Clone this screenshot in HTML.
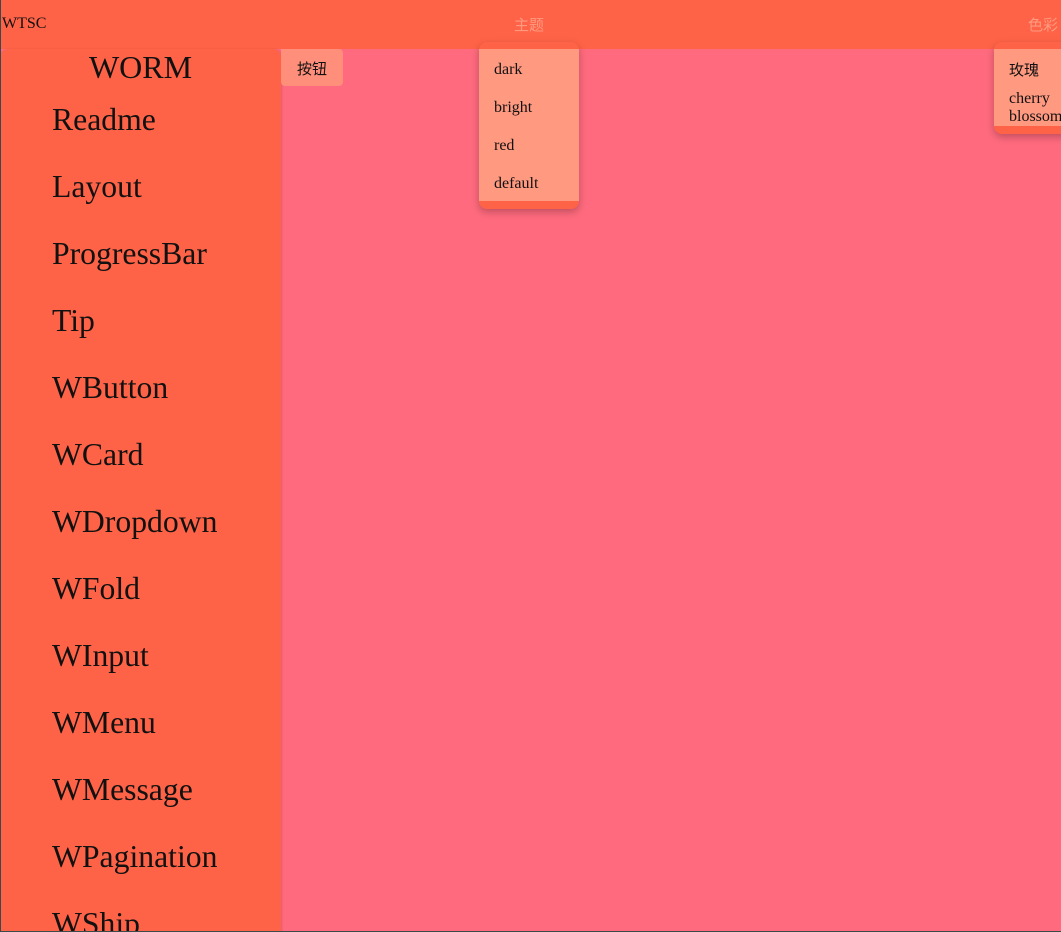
<!DOCTYPE html>
<html><head><meta charset="utf-8"><style>
*{margin:0;padding:0;box-sizing:border-box}
html,body{width:1061px;height:932px;overflow:hidden}
body{background:#ff6a7e;font-family:"Liberation Serif","Noto Serif CJK SC",serif;position:relative}
.bl{position:absolute;left:0;top:0;width:1px;height:932px;background:#3a4a4a;z-index:5}
.bb{position:absolute;left:0;top:931px;width:1061px;height:1px;background:#3a4a4a;z-index:5}
.hdr{position:absolute;left:0;top:0;width:1061px;height:49px;background:#ff6347}
.wtsc{position:absolute;left:2px;top:15px;font-size:16px;color:#111}
.t1{position:absolute;left:514px;top:14px;font-size:15px;color:#ff9a80;font-family:"Liberation Sans","Noto Sans CJK SC",sans-serif}
.t2{position:absolute;left:1028px;top:14px;font-size:15px;color:#ff9a80;font-family:"Liberation Sans","Noto Sans CJK SC",sans-serif}
.side{position:absolute;left:0;top:49px;width:281px;height:890px;background:#ff6347;border-radius:8px 8px 0 0;box-shadow:1px 0 2px rgba(0,0,0,.12)}
.worm{position:absolute;left:0;width:281px;top:47px;text-align:center;font-size:32px;line-height:40px;color:#111}
.items{position:absolute;left:52px;top:86px;font-size:31.7px;line-height:67px;color:#111}
.btn{position:absolute;left:281px;top:49px;width:62px;height:37px;background:#ff8e7a;border-radius:0 4px 4px 4px;font-size:15px;line-height:41px;text-align:center;font-family:"Liberation Sans","Noto Sans CJK SC",sans-serif;color:#111}
.dd{position:absolute;background:#ff6347;border-radius:8px;box-shadow:0 3px 8px rgba(0,0,0,.25);padding:7px 0 8px}
.dd .in{background:#ff9980}
.d1{left:479px;top:42px;width:100px}
.d1 .in{padding-top:2px;height:152px}
.d1 .it{height:38px;line-height:38px;padding-left:15px;font-size:16px;color:#111}
.d2{left:994px;top:42px;width:80px}
.d2 .in{padding:10px 0 0 15px;font-size:16px;color:#111;height:77px}
</style></head><body>
<div class="hdr"></div>
<div class="wtsc">WTSC</div>
<div class="t1">主题</div>
<div class="t2">色彩</div>
<div class="side"></div>
<div class="worm">WORM</div>
<div class="items">Readme<br>Layout<br>ProgressBar<br>Tip<br>WButton<br>WCard<br>WDropdown<br>WFold<br>WInput<br>WMenu<br>WMessage<br>WPagination<br>WShip</div>
<div class="btn">按钮</div>
<div class="dd d1"><div class="in"><div class="it">dark</div><div class="it">bright</div><div class="it">red</div><div class="it">default</div></div></div>
<div class="dd d2"><div class="in"><div style="font-family:'Liberation Sans','Noto Sans CJK SC',sans-serif;font-size:15px;line-height:24px">玫瑰</div><div style="line-height:18px;margin-top:7px">cherry<br>blossom</div></div></div>
<div class="bl"></div><div class="bb"></div>
</body></html>
